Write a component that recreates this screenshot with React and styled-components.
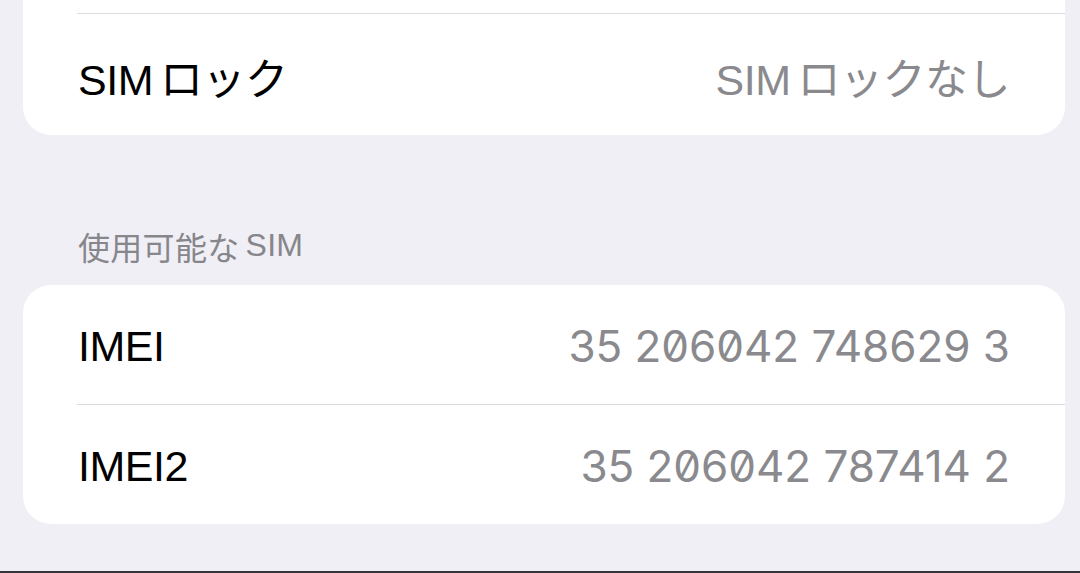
import React from 'react';
import styled, { createGlobalStyle } from 'styled-components';

const GlobalStyle = createGlobalStyle`
  html, body {
    margin: 0;
    padding: 0;
    background: #f0eff5;
  }
  body {
    font-family: "Liberation Sans", "Noto Sans CJK JP", sans-serif;
    -webkit-font-smoothing: antialiased;
  }
`;

const Screen = styled.div`
  height: 573px;
  display: flex;
  flex-direction: column;
  background: #f0eff5;
  overflow: hidden;
`;

const Content = styled.div`
  flex: 1;
  padding: 0 15px 0 23px;
  display: flex;
  flex-direction: column;
`;

const Card = styled.div`
  background: #ffffff;
  border-radius: ${p => (p.$cutTop ? '0 0 28px 28px' : '28px')};
  display: flex;
  flex-direction: column;
  padding-top: ${p => (p.$cutTop ? '13px' : '0')};
`;

const Row = styled.div`
  height: ${p => p.$h || 120}px;
  display: flex;
  align-items: center;
  justify-content: space-between;
  padding: 3px 55px 0 55px;
  box-sizing: border-box;
  border-top: ${p => (p.$divider ? '1px solid #dcdce0' : 'none')};
  margin-left: ${p => (p.$divider ? '54px' : '0')};
  padding-left: ${p => (p.$divider ? '1px' : '55px')};
`;

const Label = styled.span`
  font-size: 43px;
  color: #000000;
  letter-spacing: -0.5px;
`;

const Value = styled(Label)`
  color: #8a8a8e;
`;

// extra room between a latin run and the kana that follows or precedes it
const Latin = styled.span`
  margin: ${p => (p.$after ? '0 7px 0 0' : '0 0 0 6px')};
`;

// IMEI numbers: proportional digits with a slashed zero
const Digits = styled.span`
  font-family: "Inter", "Liberation Sans", sans-serif;
  font-feature-settings: "zero" 1;
  font-size: 44px;
  letter-spacing: -0.05px;
  color: #8a8a8e;
`;

const SectionHeader = styled.div`
  height: 79px;
  padding: 0 0 0 55px;
  display: flex;
  align-items: center;
  font-size: 32px;
  letter-spacing: 0.3px;
  color: #86868b;
  margin-top: 71px;
`;

const HomeEdge = styled.div`
  height: 2px;
  background: #36363a;
`;

const imeis = [
  { label: 'IMEI', value: '35 206042 748629 3' },
  { label: 'IMEI2', value: '35 206042 787414 2' },
];

export default function App() {
  return (
    <Screen>
      <GlobalStyle />
      <Content>
        <Card $cutTop>
          <Row $h={122} $divider>
            <Label><Latin $after>SIM</Latin>ロック</Label>
            <Value><Latin $after>SIM</Latin>ロックなし</Value>
          </Row>
        </Card>
        <SectionHeader>使用可能な<Latin>SIM</Latin></SectionHeader>
        <Card>
          {imeis.map((item, i) => (
            <Row key={item.label} $divider={i > 0} $h={i > 0 ? 120 : 119}>
              <Label>{item.label}</Label>
              <Digits>{item.value}</Digits>
            </Row>
          ))}
        </Card>
      </Content>
      <HomeEdge />
    </Screen>
  );
}
